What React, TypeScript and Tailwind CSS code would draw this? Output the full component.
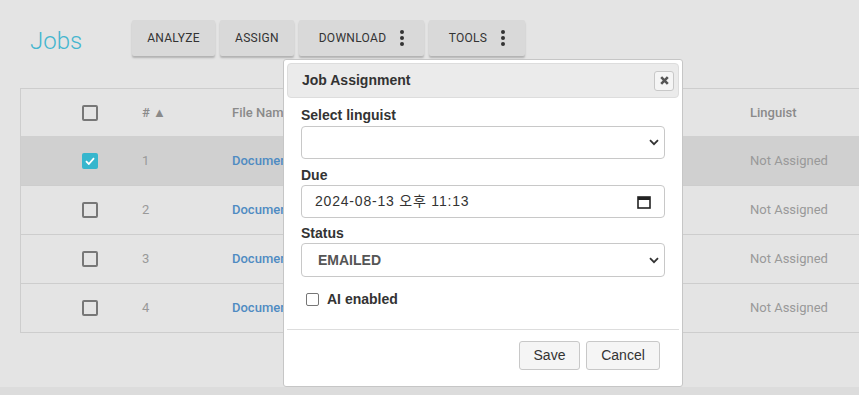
import React from 'react';

const rows = [
  { id: 1, checked: true },
  { id: 2, checked: false },
  { id: 3, checked: false },
  { id: 4, checked: false },
];

const VDots = () => (
  <svg width="4" height="16" viewBox="0 0 4 16" className="ml-[14px]">
    <circle cx="2" cy="2" r="2" fill="#333" />
    <circle cx="2" cy="8" r="2" fill="#333" />
    <circle cx="2" cy="14" r="2" fill="#333" />
  </svg>
);

const ToolButton: React.FC<{ label: string; menu?: boolean; w: string }> = ({ label, menu, w }) => (
  <button
    className={`${w} h-[36px] flex items-center justify-center bg-[#d9d9d9] rounded-[2px] shadow-[0_2px_2px_rgba(0,0,0,0.22)] text-[12px] font-normal text-[#333] uppercase tracking-[0.3px]`}
  >
    {label}
    {menu && <VDots />}
  </button>
);

const Check: React.FC<{ on: boolean }> = ({ on }) =>
  on ? (
    <span className="w-[16px] h-[16px] rounded-[2px] bg-[#36b6cd] flex items-center justify-center">
      <svg width="10" height="8" viewBox="0 0 10 8">
        <path d="M1 4.2 L3.8 7 L9 1.2" stroke="#fff" strokeWidth="1.8" fill="none" />
      </svg>
    </span>
  ) : (
    <span className="w-[16px] h-[16px] rounded-[2px] border-2 border-[#777]" />
  );

const Chevron = () => (
  <svg width="10" height="7" viewBox="0 0 10 7">
    <path d="M1 1.2 L5 5.2 L9 1.2" stroke="#333" strokeWidth="1.8" fill="none" />
  </svg>
);

const Field: React.FC<{ children?: React.ReactNode; right: React.ReactNode; h?: string }> = ({ children, right, h = 'h-[33px]' }) => (
  <div className={`${h} w-[364px] border border-[#c8c8c8] rounded-[4px] bg-white flex items-center justify-between pr-[5px]`}>
    <div>{children}</div>
    {right}
  </div>
);

export default function App() {
  return (
    <div className="relative w-full h-[395px] bg-[#e4e4e4] overflow-hidden flex flex-col font-['Roboto',sans-serif]">
      <div className="flex-1">
        <div className="flex items-center pt-[20px]">
          <h1 className="w-[132px] pl-[30px] text-[24px] font-light text-[#45b6cf] leading-none pt-[6px]">Jobs</h1>
          <div className="flex gap-[5px]">
            <ToolButton label="Analyze" w="w-[83px]" />
            <ToolButton label="Assign" w="w-[74px]" />
            <ToolButton label="Download" menu w="w-[125px]" />
            <ToolButton label="Tools" menu w="w-[96px]" />
          </div>
        </div>

        <div className="ml-[20px] mt-[32px] border-l border-t border-b border-[#cdcdcd] text-[13px]">
          <div className="grid grid-cols-[121px_90px_518px_1fr] h-[47px] items-center text-[#8a8a8a] font-medium">
            <div className="pl-[61px] flex"><Check on={false} /></div>
            <div>#&nbsp;▲</div>
            <div>File Name</div>
            <div>Linguist</div>
          </div>
          {rows.map((r, i) => (
            <div
              key={r.id}
              className={`grid grid-cols-[121px_90px_518px_1fr] h-[49px] items-center ${r.checked ? 'bg-[#d0d0d0]' : ''} ${i > 0 ? 'border-t border-[#cdcdcd]' : ''}`}
            >
              <div className="pl-[61px] flex"><Check on={r.checked} /></div>
              <div className="text-[#999]">{r.id}</div>
              <div className="text-[#4f8bc2] font-medium">Document {r.id}</div>
              <div className="text-[#999]">Not Assigned</div>
            </div>
          ))}
        </div>
      </div>
      <div className="h-[8px] bg-[#dcdcdc]" />

      {/* modal */}
      <div className="absolute left-[283px] top-[59px] w-[400px] h-[328px] bg-white border border-[#c6c6c6] rounded-[3px] p-[3px] font-['Liberation_Sans',Arial,sans-serif] text-[#333]">
        <div className="h-[35px] bg-[#ebebeb] border border-[#dddddd] rounded-[4px] flex items-center justify-between pl-[14px] pr-[4px]">
          <span className="text-[14px] font-bold">Job Assignment</span>
          <button className="w-[20px] h-[20px] border border-[#c8c8c8] rounded-[3px] bg-[#f5f5f5] flex items-center justify-center">
            <svg width="9" height="9" viewBox="0 0 9 9">
              <path d="M1.2 1.2 L7.8 7.8 M7.8 1.2 L1.2 7.8" stroke="#555" strokeWidth="2.6" />
            </svg>
          </button>
        </div>

        <div className="pl-[14px] pt-[9px] text-[14px]">
          <div className="font-bold h-[17px] leading-[17px] mb-[2px]">Select linguist</div>
          <Field right={<Chevron />} />
          <div className="font-bold h-[17px] leading-[17px] mt-[8px] mb-[1px]">Due</div>
          <Field right={
            <svg width="14" height="14" viewBox="0 0 14 14" className="mr-[8px]">
              <rect x="1" y="2" width="12" height="11" fill="none" stroke="#222" strokeWidth="1.6" />
              <rect x="1" y="2" width="12" height="3" fill="#222" />
            </svg>
          }>
            <span className="pl-[13px] tracking-[0.8px] text-[#333] font-['Liberation_Sans','Noto_Sans_CJK_KR',sans-serif]">2024-08-13 오후 11:13</span>
          </Field>
          <div className="font-bold h-[17px] leading-[17px] mt-[7px] mb-[1px]">Status</div>
          <Field h="h-[34px]" right={<Chevron />}>
            <span className="pl-[16px] font-bold text-[#555]">EMAILED</span>
          </Field>
          <label className="flex items-center mt-[14px] pl-[5px] h-[17px]">
            <span className="w-[13px] h-[13px] border border-[#767676] rounded-[2px] bg-white" />
            <span className="ml-[8px] font-bold">AI enabled</span>
          </label>
        </div>

        <div className="mt-[21px] border-t border-[#dddddd]" />
        <div className="flex justify-end gap-[6px] pr-[19px] pt-[11px]">
          <button className="w-[61px] h-[29px] border border-[#c8c8c8] rounded-[3px] bg-[#f5f5f5] text-[14px] text-[#333]">Save</button>
          <button className="w-[74px] h-[29px] border border-[#c8c8c8] rounded-[3px] bg-[#f5f5f5] text-[14px] text-[#333]">Cancel</button>
        </div>
      </div>
    </div>
  );
}
